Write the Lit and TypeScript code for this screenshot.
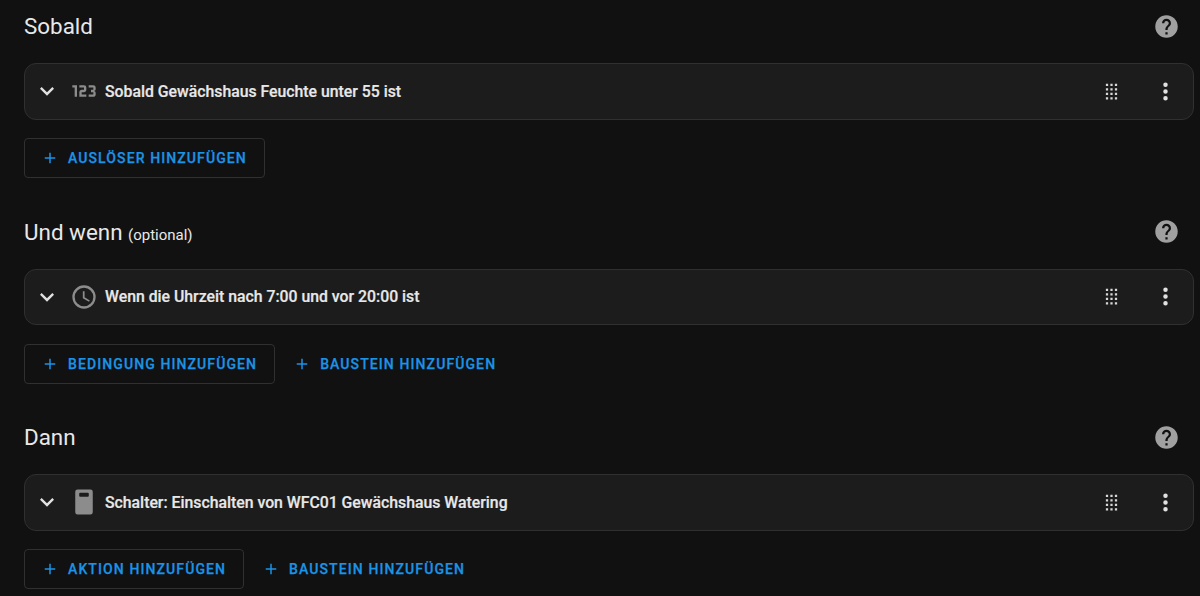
import { LitElement, html, css, svg } from 'lit';
import { customElement } from 'lit/decorators.js';

const ICONS = {
  chevron: 'M7.41,8.58L12,13.17L16.59,8.58L18,10L12,16L6,10L7.41,8.58Z',
  numeric:
    'M4,17V9H2V7H6V17H4M22,15C22,16.11 21.1,17 20,17H16V15H20V13H18V11H20V9H16V7H20A2,2 0 0,1 22,9V10.5A1.5,1.5 0 0,1 20.5,12A1.5,1.5 0 0,1 22,13.5V15M14,15V17H8V13C8,11.89 8.9,11 10,11H12V9H8V7H12A2,2 0 0,1 14,9V11C14,12.11 13.1,13 12,13H10V15H14Z',
  clock:
    'M12,20A8,8 0 0,0 20,12A8,8 0 0,0 12,4A8,8 0 0,0 4,12A8,8 0 0,0 12,20M12,2A10,10 0 0,1 22,12A10,10 0 0,1 12,22C6.47,22 2,17.5 2,12A10,10 0 0,1 12,2M12.5,7V12.25L17,14.92L16.25,16.15L11,13V7H12.5Z',
  device:
    'M6.5,1.3H17.5A2,2 0 0,1 19.5,3.3V20.7A2,2 0 0,1 17.5,22.7H6.5A2,2 0 0,1 4.5,20.7V3.3A2,2 0 0,1 6.5,1.3M8.7,4.1A0.8,0.8 0 0,0 7.9,4.9V6.7A0.8,0.8 0 0,0 8.7,7.5H15.3A0.8,0.8 0 0,0 16.1,6.7V4.9A0.8,0.8 0 0,0 15.3,4.1H8.7Z',
  drag: 'M7,19V17H9V19H7M11,19V17H13V19H11M15,19V17H17V19H15M7,15V13H9V15H7M11,15V13H13V15H11M15,15V13H17V15H15M7,11V9H9V11H7M11,11V9H13V11H11M15,11V9H17V11H15M7,7V5H9V7H7M11,7V5H13V7H11M15,7V5H17V7H15Z',
  dots: 'M12,16A2,2 0 0,1 14,18A2,2 0 0,1 12,20A2,2 0 0,1 10,18A2,2 0 0,1 12,16M12,10A2,2 0 0,1 14,12A2,2 0 0,1 12,14A2,2 0 0,1 10,12A2,2 0 0,1 12,10M12,4A2,2 0 0,1 14,6A2,2 0 0,1 12,8A2,2 0 0,1 10,6A2,2 0 0,1 12,4Z',
  help: 'M15.07,11.25L14.17,12.17C13.45,12.89 13,13.5 13,15H11V14.5C11,13.39 11.45,12.39 12.17,11.67L13.41,10.41C13.78,10.05 14,9.55 14,9C14,7.89 13.1,7 12,7A2,2 0 0,0 10,9H8A4,4 0 0,1 12,5A4,4 0 0,1 16,9C16,9.88 15.64,10.67 15.07,11.25M13,19H11V17H13M12,2A10,10 0 0,0 2,12A10,10 0 0,0 12,22A10,10 0 0,0 22,12C22,6.47 17.5,2 12,2Z',
  plus: 'M19,13H13V19H11V13H5V11H11V5H13V11H19V13Z',
};

type IconName = keyof typeof ICONS;

const icon = (name: IconName, cls = '') => html`
  <svg class="icon ${cls}" viewBox="0 0 24 24" aria-hidden="true" fill-rule="evenodd">
    ${svg`<path d=${ICONS[name]}></path>`}
  </svg>
`;

interface Section {
  title: string;
  note?: string;
  leading: IconName;
  label: string;
  add: string;
  extra?: string;
}

const SECTIONS: Section[] = [
  {
    title: 'Sobald',
    leading: 'numeric',
    label: 'Sobald Gewächshaus Feuchte unter 55 ist',
    add: 'Auslöser hinzufügen',
  },
  {
    title: 'Und wenn',
    note: '(optional)',
    leading: 'clock',
    label: 'Wenn die Uhrzeit nach 7:00 und vor 20:00 ist',
    add: 'Bedingung hinzufügen',
    extra: 'Baustein hinzufügen',
  },
  {
    title: 'Dann',
    leading: 'device',
    label: 'Schalter: Einschalten von WFC01 Gewächshaus Watering',
    add: 'Aktion hinzufügen',
    extra: 'Baustein hinzufügen',
  },
];

@customElement('app-root')
export class AppRoot extends LitElement {
  static styles = css`
    :host {
      display: block;
      height: 596px;
      overflow: hidden;
      background: #111111;
      color: #e1e1e1;
      font-family: Roboto, 'Liberation Sans', sans-serif;
    }

    .page {
      display: flex;
      flex-direction: column;
      gap: 31.5px;
      padding: 4px 6.5px 0 24px;
    }

    .header {
      display: flex;
      align-items: center;
      justify-content: space-between;
      height: 44px;
      margin-bottom: 15px;
    }

    .title {
      margin: 0;
      font-size: 22.4px;
      font-weight: 400;
      color: #e8e8e8;
    }

    .note {
      font-size: 15px;
    }

    .icon {
      display: block;
      width: 28px;
      height: 28px;
      flex: none;
      fill: currentColor;
    }

    .help {
      width: 27px;
      height: 27px;
      margin-right: 14px;
      color: #a0a0a0;
    }

    .card {
      display: flex;
      align-items: center;
      box-sizing: border-box;
      height: 56.5px;
      margin-bottom: 18.5px;
      padding: 0 13.5px 0 8px;
      background: #1c1c1c;
      border: 1px solid #303030;
      border-radius: 12px;
    }

    .chevron {
      color: #e1e1e1;
      margin-right: 9px;
    }

    .leading {
      color: #8c8c8c;
      margin-right: 7px;
    }

    .label {
      flex: 1;
      font-size: 15.8px;
      font-weight: 500;
      color: #e8e8e8;
      -webkit-text-stroke: 0.2px currentColor;
    }

    .drag {
      width: 27px;
      height: 27px;
      margin-right: 27.5px;
      color: #d8d8d8;
    }

    .dots {
      width: 27px;
      height: 27px;
      color: #e1e1e1;
    }

    .actions {
      display: flex;
      align-items: center;
      gap: 1px;
      height: 40px;
    }

    .btn {
      display: flex;
      align-items: center;
      box-sizing: border-box;
      height: 40px;
      margin: 0;
      padding: 0 17px 0 16px;
      background: none;
      border: 1px solid transparent;
      border-radius: 4px;
      color: #1b93e6;
      font: inherit;
      font-size: 14px;
      font-weight: 500;
      letter-spacing: 1.1px;
      text-transform: uppercase;
      -webkit-text-stroke: 0.25px currentColor;
    }

    .btn.outlined {
      border-color: #303030;
    }

    .btn .icon {
      width: 18px;
      height: 18px;
      margin-right: 9px;
    }
  `;

  private renderSection(s: Section) {
    return html`
      <section>
        <div class="header">
          <h2 class="title">${s.title}${s.note ? html` <span class="note">${s.note}</span>` : ''}</h2>
          ${icon('help', 'help')}
        </div>
        <div class="card">
          ${icon('chevron', 'chevron')} ${icon(s.leading, 'leading')}
          <span class="label">${s.label}</span>
          ${icon('drag', 'drag')} ${icon('dots', 'dots')}
        </div>
        <div class="actions">
          <button class="btn outlined">${icon('plus')}${s.add}</button>
          ${s.extra ? html`<button class="btn">${icon('plus')}${s.extra}</button>` : ''}
        </div>
      </section>
    `;
  }

  render() {
    return html`<div class="page">${SECTIONS.map((s) => this.renderSection(s))}</div>`;
  }
}
